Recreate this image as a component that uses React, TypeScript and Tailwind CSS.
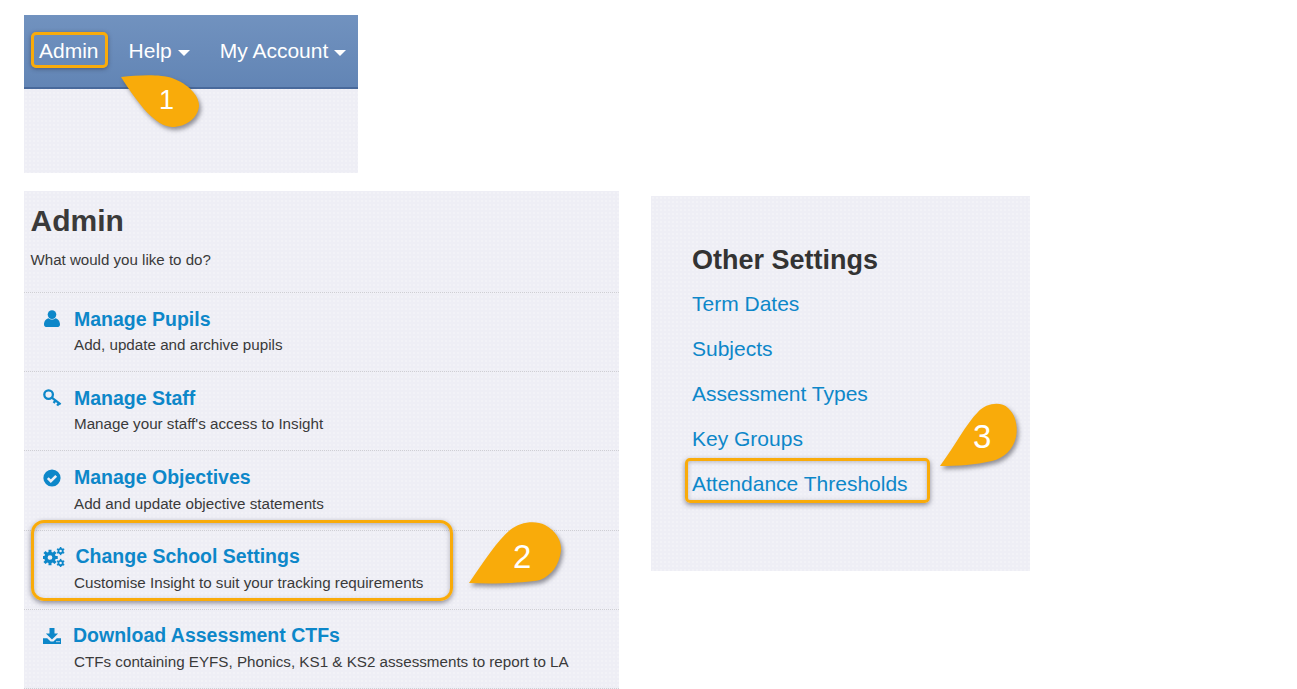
import React from "react";

const sans = "font-['Liberation_Sans',Arial,sans-serif]";
const texture =
  "bg-[#eeeef5] bg-[radial-gradient(rgba(255,255,255,0.22)_0.8px,transparent_1px)] bg-[length:4px_4px]";

function UserIcon() {
  return (
    <svg width="16" height="18" viewBox="0 0 16 18" fill="#0d87c9">
      <circle cx="8" cy="4.6" r="4.3" />
      <path d="M0 14.5C0 11 2.2 8.6 4.6 8.2 5.5 9.1 6.7 9.6 8 9.6s2.5-.5 3.4-1.4C13.8 8.6 16 11 16 14.5c0 1.9-1.4 2.6-3 2.6H3c-1.6 0-3-.7-3-2.6z" />
    </svg>
  );
}
function KeyIcon() {
  return (
    <svg width="19" height="18" viewBox="0 0 19 18" fill="none" stroke="#0d87c9">
      <circle cx="5.6" cy="5.6" r="4.3" strokeWidth="2.3" />
      <path d="M8.8 8.6 L17.6 15.4 M12.6 11.4 L10.6 14 M16 14 L14.2 16.6" strokeWidth="2.3" />
    </svg>
  );
}
function CheckIcon() {
  return (
    <svg width="18" height="18" viewBox="0 0 18 18">
      <circle cx="9" cy="9" r="8.6" fill="#0d87c9" />
      <path d="M4.8 9.2 L7.8 12.2 L13.2 6.8" fill="none" stroke="#eeeef5" strokeWidth="2.6" />
    </svg>
  );
}
function Gear({ cx, cy, r, teeth }: { cx: number; cy: number; r: number; teeth: number }) {
  const items = [];
  for (let i = 0; i < teeth; i++) {
    const a = (360 / teeth) * i;
    items.push(
      <rect
        key={i}
        x={cx - r * 0.24}
        y={cy - r * 1.25}
        width={r * 0.48}
        height={r * 0.6}
        fill="#0d87c9"
        transform={`rotate(${a} ${cx} ${cy})`}
      />
    );
  }
  return (
    <g>
      {items}
      <circle cx={cx} cy={cy} r={r * 0.66} fill="none" stroke="#0d87c9" strokeWidth={r * 0.56} />
    </g>
  );
}
function CogsIcon() {
  return (
    <svg width="22" height="20" viewBox="0 0 22 20">
      <Gear cx={7} cy={10.5} r={6.2} teeth={8} />
      <Gear cx={17.6} cy={4} r={3.3} teeth={6} />
      <Gear cx={17.6} cy={16} r={3.3} teeth={6} />
    </svg>
  );
}
function DownloadIcon() {
  return (
    <svg width="18" height="16" viewBox="0 0 18 16" fill="#0d87c9">
      <path d="M6.5 0h5v5.5h3.6L9 11.6 2.9 5.5h3.6z" />
      <path d="M0 10.2h4.2L7.6 13.4h2.8l3.4-3.2H18V16H0z" />
      <rect x="13.4" y="13" width="1.2" height="1.2" fill="#eeeef5" />
      <rect x="15.4" y="13" width="1.2" height="1.2" fill="#eeeef5" />
    </svg>
  );
}

const rows = [
  { icon: <UserIcon />, slot: "w-[50px] pl-[20px]", title: "Manage Pupils", sub: "Add, update and archive pupils" },
  { icon: <KeyIcon />, slot: "w-[50px] pl-[19px]", title: "Manage Staff", sub: "Manage your staff's access to Insight" },
  { icon: <CheckIcon />, slot: "w-[50px] pl-[19px]", title: "Manage Objectives", sub: "Add and update objective statements" },
  { icon: <CogsIcon />, slot: "w-[51.5px] pl-[19px]", title: "Change School Settings", sub: "Customise Insight to suit your tracking requirements" },
  { icon: <DownloadIcon />, slot: "w-[49px] pl-[19px]", title: "Download Assessment CTFs", sub: "CTFs containing EYFS, Phonics, KS1 & KS2 assessments to report to LA" },
];

function Caret() {
  return <span className="ml-[6px] inline-block h-0 w-0 border-x-[6px] border-t-[6px] border-x-transparent border-t-white align-middle" />;
}

const links = ["Term Dates", "Subjects", "Assessment Types", "Key Groups", "Attendance Thresholds"];

export default function App() {
  return (
    <div className={`relative h-[689px] w-[1297px] overflow-hidden bg-white ${sans}`}>
      <div className="flex items-start pl-[24px] pt-[15px]">
        <div className="w-[595px]">
          <div className={`h-[158px] w-[334px] ${texture}`}>
            <div className="flex h-[74px] items-center border-b-2 border-[#48699b] bg-gradient-to-b from-[#7192bf] to-[#6285b5] pl-[15px] text-[21px] text-white">
              <span>Admin</span>
              <span className="ml-[30px]">Help<Caret /></span>
              <span className="ml-[30px]">My Account<Caret /></span>
            </div>
          </div>
          <div className={`mt-[18px] h-[498px] ${texture}`}>
            <div className="h-[102.3px] border-b border-dotted border-[#cfcfd4] pl-[6.5px] pt-[12px]">
              <h1 className="text-[30px] leading-[36px] font-bold text-[#3a3a3a]">Admin</h1>
              <p className="mt-[11px] text-[15.1px] leading-[20px] text-[#3a3a3a]">What would you like to do?</p>
            </div>
            {rows.map((r) => (
              <div key={r.title} className="h-[79.1px] border-b border-dotted border-[#cfcfd4] pt-[12.1px]">
                <div className="flex h-[28px] items-center">
                  <div className={`flex shrink-0 items-center ${r.slot}`}>{r.icon}</div>
                  <span className="text-[19.5px] font-bold text-[#0d87c9]">{r.title}</span>
                </div>
                <p className="mt-[2px] pl-[50px] text-[15.2px] leading-[20px] text-[#3a3a3a]">{r.sub}</p>
              </div>
            ))}
          </div>
        </div>
        <div className={`ml-[32px] mt-[181px] h-[375px] w-[379px] pl-[41px] pt-[45px] ${texture}`}>
          <h2 className="text-[27px] leading-[38px] font-bold text-[#333333]">Other Settings</h2>
          <ul className="mt-[2px]">
            {links.map((l) => (
              <li key={l} className="h-[45px] text-[21px] leading-[45px] text-[#0d87c9]">{l}</li>
            ))}
          </ul>
        </div>
      </div>

      {/* Callout highlight boxes */}
      <div className="absolute left-[31px] top-[32px] h-[36px] w-[77px] rounded-[5px] border-[3px] border-[#f9ab0a] shadow-[0_1px_4px_rgba(40,40,60,0.5)]" />
      <div className="absolute left-[31px] top-[520px] h-[81px] w-[422px] rounded-[13px] border-[3px] border-[#f9ab0a] shadow-[0_2px_5px_rgba(40,40,60,0.5),inset_0_2px_5px_rgba(40,40,60,0.3)]" />
      <div className="absolute left-[685px] top-[458px] h-[45px] w-[245px] rounded-[5px] border-[3px] border-[#f9ab0a] shadow-[0_2px_5px_rgba(40,40,60,0.5),inset_0_1px_4px_rgba(40,40,60,0.3)]" />

      {/* Teardrop pins */}
      <svg className="pointer-events-none absolute left-0 top-0 drop-shadow-[2px_3px_2px_rgba(50,50,60,0.5)]" width="1297" height="689">
        <path fill="#f9ab0a" d="M121 77C138 75 160 74 172 78C188 84 199 95 199 106C198 118 186 127 172 127C155 126 139 105 121 77Z" />
        <path fill="#f9ab0a" d="M469 583C485 560 497 541 510 530C520 522 535 520 545 525C556 531 562 541 561 551C559 565 552 575 540 580C525 583 495 584 469 583Z" />
        <path fill="#f9ab0a" d="M940 466C956 444 966 424 978 412C986 403 1001 401 1008 408C1016 415 1018 427 1016 437C1013 450 1004 458 992 461C975 465 958 466 940 466Z" />
      </svg>
      <span className="absolute left-[159px] top-[85px] text-[27px] leading-[30px] text-white">1</span>
      <span className="absolute left-[513px] top-[540px] text-[33px] leading-[34px] text-white">2</span>
      <span className="absolute left-[973px] top-[420px] text-[33px] leading-[34px] text-white">3</span>
    </div>
  );
}
